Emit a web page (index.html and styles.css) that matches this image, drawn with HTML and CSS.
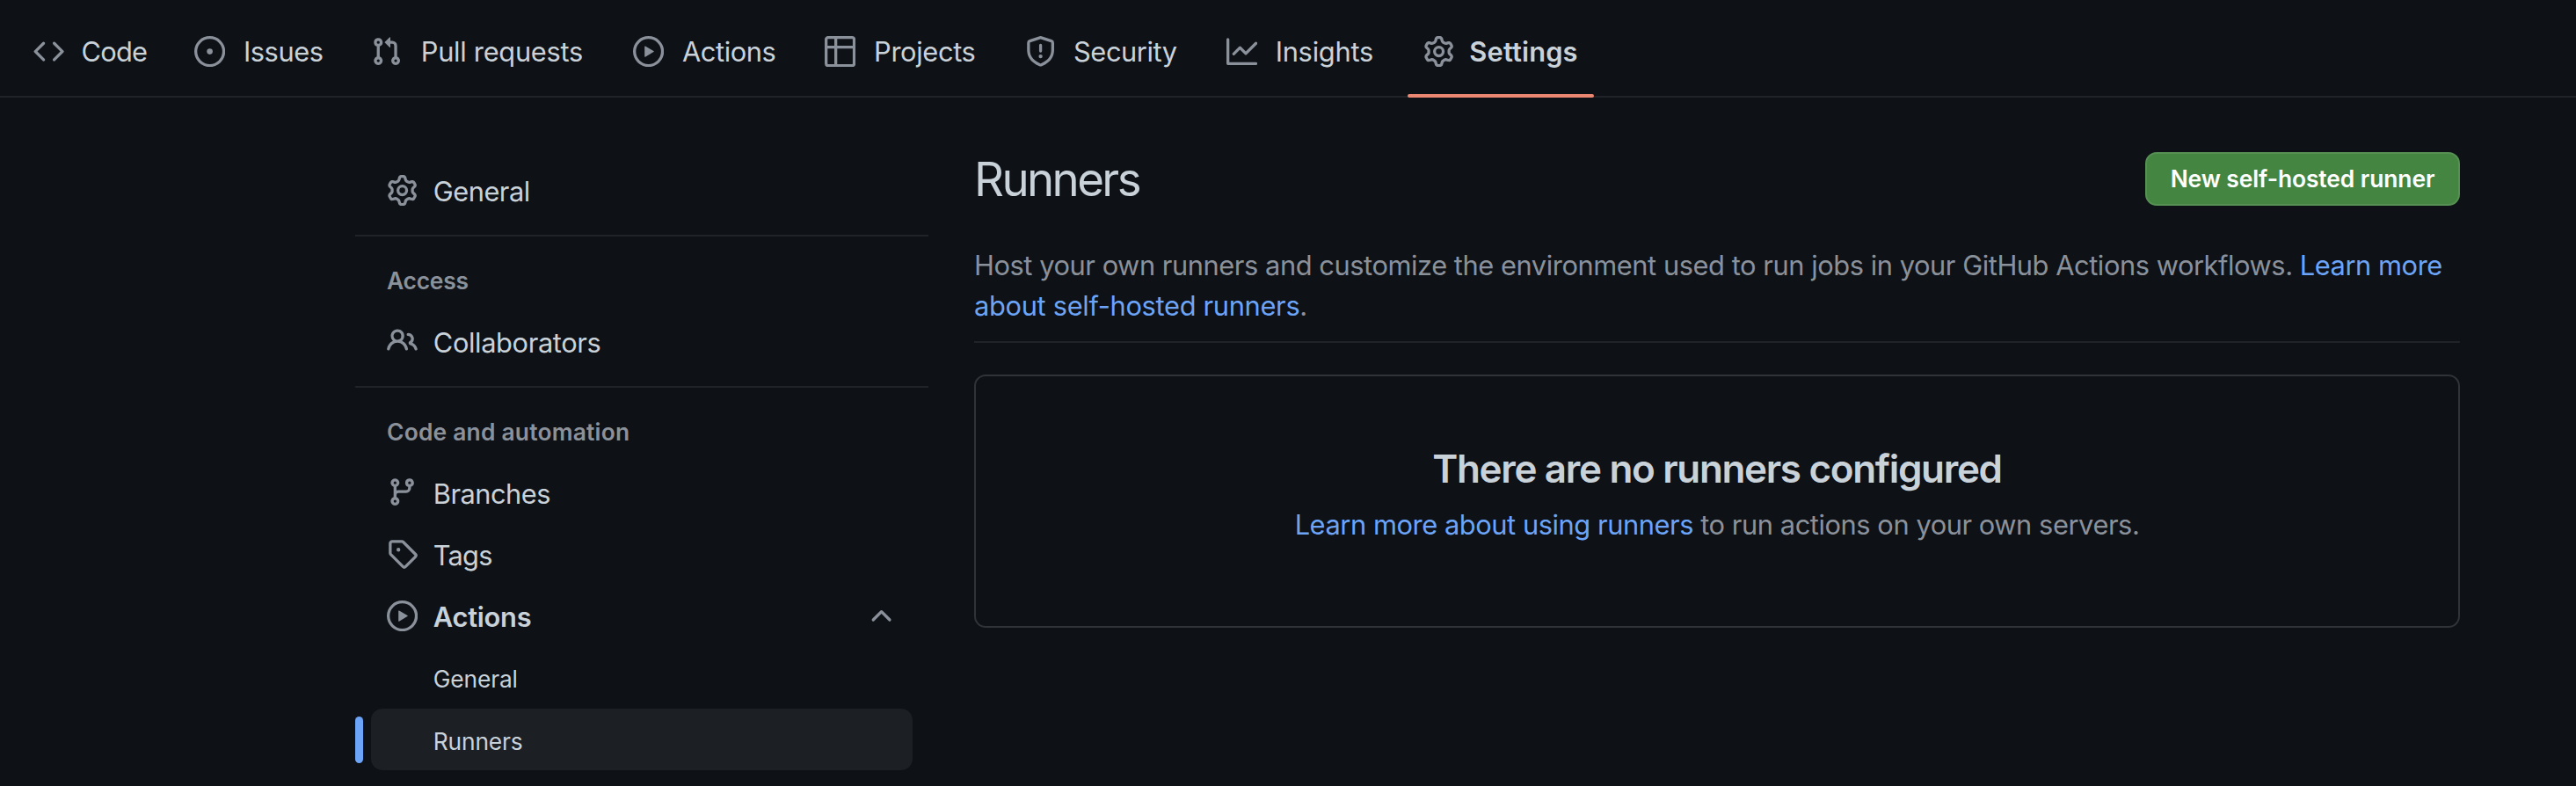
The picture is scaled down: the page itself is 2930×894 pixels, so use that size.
FILE: index.html
```html
<!DOCTYPE html>
<html lang="en">
<head>
<meta charset="utf-8">
<title>Runners</title>
<link rel="stylesheet" href="styles.css">
</head>
<body>
<nav class="tabs">
  <a class="tab tab-code"><svg class="icon" viewBox="0 0 16 16"><path d="m11.28 3.22 4.25 4.25a.75.75 0 0 1 0 1.06l-4.25 4.25a.749.749 0 0 1-1.275-.326.749.749 0 0 1 .215-.734L13.94 8l-3.72-3.72a.749.749 0 0 1 .326-1.275.749.749 0 0 1 .734.215Zm-6.56 0a.751.751 0 0 1 1.042.018.751.751 0 0 1 .018 1.042L2.06 8l3.72 3.72a.749.749 0 0 1-.326 1.275.749.749 0 0 1-.734-.215L.47 8.53a.75.75 0 0 1 0-1.06Z"/></svg><span>Code</span></a>
  <a class="tab tab-issues"><svg class="icon" viewBox="0 0 16 16"><path d="M8 9.5a1.5 1.5 0 1 0 0-3 1.5 1.5 0 0 0 0 3Z"/><path d="M8 0a8 8 0 1 1 0 16A8 8 0 0 1 8 0ZM1.5 8a6.5 6.5 0 1 0 13 0 6.5 6.5 0 0 0-13 0Z"/></svg><span>Issues</span></a>
  <a class="tab tab-pulls"><svg class="icon" viewBox="0 0 16 16"><path d="M1.5 3.25a2.25 2.25 0 1 1 3 2.122v5.256a2.251 2.251 0 1 1-1.5 0V5.372A2.25 2.25 0 0 1 1.5 3.25Zm5.677-.177L9.573.677A.25.25 0 0 1 10 .854V2.5h1A2.5 2.5 0 0 1 13.5 5v5.628a2.251 2.251 0 1 1-1.5 0V5a1 1 0 0 0-1-1h-1v1.646a.25.25 0 0 1-.427.177L7.177 3.427a.25.25 0 0 1 0-.354ZM3.75 2.5a.75.75 0 1 0 0 1.5.75.75 0 0 0 0-1.5Zm0 9.5a.75.75 0 1 0 0 1.5.75.75 0 0 0 0-1.5Zm8.25.75a.75.75 0 1 0 1.5 0 .75.75 0 0 0-1.5 0Z"/></svg><span>Pull requests</span></a>
  <a class="tab tab-actions"><svg class="icon" viewBox="0 0 16 16"><path d="M8 0a8 8 0 1 1 0 16A8 8 0 0 1 8 0ZM1.5 8a6.5 6.5 0 1 0 13 0 6.5 6.5 0 0 0-13 0Zm4.879-2.773 4.264 2.559a.25.25 0 0 1 0 .428l-4.264 2.559A.25.25 0 0 1 6 10.559V5.442a.25.25 0 0 1 .379-.215Z"/></svg><span>Actions</span></a>
  <a class="tab tab-projects"><svg class="icon" viewBox="0 0 16 16"><path d="M0 1.75C0 .784.784 0 1.75 0h12.5C15.216 0 16 .784 16 1.75v12.5A1.75 1.75 0 0 1 14.25 16H1.75A1.75 1.75 0 0 1 0 14.25ZM6.5 6.5v8h7.75a.25.25 0 0 0 .25-.25V6.5Zm8-1.5V1.75a.25.25 0 0 0-.25-.25H6.5V5Zm-13 1.5v7.75c0 .138.112.25.25.25H5v-8ZM5 5V1.5H1.75a.25.25 0 0 0-.25.25V5Z"/></svg><span>Projects</span></a>
  <a class="tab tab-security"><svg class="icon" viewBox="0 0 16 16"><path d="M7.467.133a1.748 1.748 0 0 1 1.066 0l5.25 1.68A1.75 1.75 0 0 1 15 3.48V7c0 1.566-.32 3.182-1.303 4.682-.983 1.498-2.585 2.813-5.032 3.855a1.697 1.697 0 0 1-1.33 0c-2.447-1.042-4.049-2.357-5.032-3.855C1.32 10.182 1 8.566 1 7V3.48a1.75 1.75 0 0 1 1.217-1.667Zm.61 1.429a.25.25 0 0 0-.153 0l-5.25 1.68a.25.25 0 0 0-.174.238V7c0 1.358.275 2.666 1.057 3.86.784 1.194 2.121 2.34 4.366 3.297a.196.196 0 0 0 .154 0c2.245-.956 3.582-2.104 4.366-3.298C13.225 9.666 13.5 8.36 13.5 7V3.48a.251.251 0 0 0-.174-.237l-5.25-1.68ZM8.75 4.75v3a.75.75 0 0 1-1.5 0v-3a.75.75 0 0 1 1.5 0ZM9 10.5a1 1 0 1 1-2 0 1 1 0 0 1 2 0Z"/></svg><span>Security</span></a>
  <a class="tab tab-insights"><svg class="icon" viewBox="0 0 16 16"><path d="M1.5 1.75V13.5h13.75a.75.75 0 0 1 0 1.5H.75a.75.75 0 0 1-.75-.75V1.75a.75.75 0 0 1 1.5 0Zm14.28 2.53-5.25 5.25a.75.75 0 0 1-1.06 0L7 7.06 4.28 9.78a.751.751 0 0 1-1.042-.018.751.751 0 0 1-.018-1.042l3.25-3.25a.75.75 0 0 1 1.06 0L10 7.94l4.72-4.72a.751.751 0 0 1 1.042.018.751.751 0 0 1 .018 1.042Z"/></svg><span>Insights</span></a>
  <a class="tab tab-settings is-current"><svg class="icon" viewBox="0 0 16 16"><path id="gear" d="M8 0a8.2 8.2 0 0 1 .701.031C9.444.095 9.99.645 10.16 1.29l.288 1.107c.018.066.079.158.212.224.231.114.454.243.668.386.123.082.233.09.299.071l1.103-.303c.644-.176 1.392.021 1.82.63.27.385.506.792.704 1.218.315.675.111 1.422-.364 1.891l-.814.806c-.049.048-.098.147-.088.294.016.257.016.515 0 .772-.01.147.038.246.088.294l.814.806c.475.469.679 1.216.364 1.891a7.977 7.977 0 0 1-.704 1.217c-.428.61-1.176.807-1.82.63l-1.102-.302c-.067-.019-.177-.011-.3.071a5.909 5.909 0 0 1-.668.386c-.133.066-.194.158-.211.224l-.29 1.106c-.168.646-.715 1.196-1.458 1.26a8.006 8.006 0 0 1-1.402 0c-.743-.064-1.289-.614-1.458-1.26l-.289-1.106c-.018-.066-.079-.158-.212-.224a5.738 5.738 0 0 1-.668-.386c-.123-.082-.233-.09-.299-.071l-1.103.303c-.644.176-1.392-.021-1.82-.63a8.12 8.12 0 0 1-.704-1.218c-.315-.675-.111-1.422.363-1.891l.815-.806c.05-.048.098-.147.088-.294a6.214 6.214 0 0 1 0-.772c.01-.147-.038-.246-.088-.294l-.815-.806C.635 6.045.431 5.298.746 4.623a7.92 7.92 0 0 1 .704-1.217c.428-.61 1.176-.807 1.82-.63l1.102.302c.067.019.177.011.3-.071.214-.143.437-.272.668-.386.133-.066.194-.158.211-.224l.29-1.106C6.009.645 6.556.095 7.299.03 7.53.01 7.764 0 8 0Zm-.571 1.525c-.036.003-.108.036-.137.146l-.289 1.105c-.147.561-.549.967-.998 1.189-.173.086-.34.183-.5.29-.417.278-.97.423-1.529.27l-1.103-.303c-.109-.03-.175.016-.195.045-.22.312-.412.644-.573.99-.014.031-.021.11.059.19l.815.806c.411.406.562.957.53 1.456a4.709 4.709 0 0 0 0 .582c.032.499-.119 1.05-.53 1.456l-.815.806c-.081.08-.073.159-.059.19.162.346.353.677.573.989.02.03.085.076.195.046l1.102-.303c.56-.153 1.113-.008 1.53.27.161.107.328.204.501.29.447.222.85.629.997 1.189l.289 1.105c.029.109.101.143.137.146a6.6 6.6 0 0 0 1.142 0c.036-.003.108-.036.137-.146l.289-1.105c.147-.561.549-.967.998-1.189.173-.086.34-.183.5-.29.417-.278.97-.423 1.529-.27l1.103.303c.109.029.175-.016.195-.045.22-.313.411-.644.573-.99.014-.031.021-.11-.059-.19l-.815-.806c-.411-.406-.562-.957-.53-1.456a4.709 4.709 0 0 0 0-.582c-.032-.499.119-1.05.53-1.456l.815-.806c.081-.08.073-.159.059-.19a6.464 6.464 0 0 0-.573-.989c-.02-.03-.085-.076-.195-.046l-1.102.303c-.56.153-1.113.008-1.53-.27a4.44 4.44 0 0 0-.501-.29c-.447-.222-.85-.629-.997-1.189l-.289-1.105c-.029-.11-.101-.143-.137-.146a6.6 6.6 0 0 0-1.142 0ZM11 8a3 3 0 1 1-6 0 3 3 0 0 1 6 0ZM9.5 8a1.5 1.5 0 1 0-3.001.001A1.5 1.5 0 0 0 9.5 8Z"/></svg><span>Settings</span></a>
</nav>
<div class="layout">
  <aside class="sidebar">
    <a class="item"><svg class="icon" viewBox="0 0 16 16"><use href="#gear"/></svg><span class="label t-general">General</span></a>
    <div class="divider"></div>
    <h3 class="group t-access">Access</h3>
    <a class="item"><svg class="icon" viewBox="0 0 16 16"><path d="M2 5.5a3.5 3.5 0 1 1 5.898 2.549 5.508 5.508 0 0 1 3.034 4.084.75.75 0 1 1-1.482.235 4 4 0 0 0-7.9 0 .75.75 0 0 1-1.482-.236A5.507 5.507 0 0 1 3.102 8.05 3.493 3.493 0 0 1 2 5.5ZM11 4a3.001 3.001 0 0 1 2.22 5.018 5.01 5.01 0 0 1 2.56 3.012.749.749 0 0 1-.885.954.752.752 0 0 1-.549-.514 3.507 3.507 0 0 0-2.522-2.372.75.75 0 0 1-.574-.73v-.352a.75.75 0 0 1 .416-.672A1.5 1.5 0 0 0 11 5.5.75.75 0 0 1 11 4Zm-5.5-.5a2 2 0 1 0-.001 3.999A2 2 0 0 0 5.5 3.5Z"/></svg><span class="label t-collab">Collaborators</span></a>
    <div class="divider"></div>
    <h3 class="group t-codeauto">Code and automation</h3>
    <a class="item"><svg class="icon" viewBox="0 0 16 16"><path d="M9.5 3.25a2.25 2.25 0 1 1 3 2.122V6A2.5 2.5 0 0 1 10 8.5H6a1 1 0 0 0-1 1v1.128a2.251 2.251 0 1 1-1.5 0V5.372a2.25 2.25 0 1 1 1.5 0v1.836A2.493 2.493 0 0 1 6 7h4a1 1 0 0 0 1-1v-.628A2.25 2.25 0 0 1 9.5 3.25Zm-6 0a.75.75 0 1 0 1.5 0 .75.75 0 0 0-1.5 0Zm8.25-.75a.75.75 0 1 0 0 1.5.75.75 0 0 0 0-1.5ZM4.25 12a.75.75 0 1 0 0 1.5.75.75 0 0 0 0-1.5Z"/></svg><span class="label t-branches">Branches</span></a>
    <a class="item"><svg class="icon" viewBox="0 0 16 16"><path d="M1 7.775V2.75C1 1.784 1.784 1 2.75 1h5.025c.464 0 .91.184 1.238.513l6.25 6.25a1.75 1.75 0 0 1 0 2.474l-5.026 5.026a1.75 1.75 0 0 1-2.474 0l-6.25-6.25A1.752 1.752 0 0 1 1 7.775Zm1.5 0c0 .066.026.13.073.177l6.25 6.25a.25.25 0 0 0 .354 0l5.025-5.025a.25.25 0 0 0 0-.354l-6.25-6.25a.25.25 0 0 0-.177-.073H2.75a.25.25 0 0 0-.25.25ZM6 5a1 1 0 1 1 0 2 1 1 0 0 1 0-2Z"/></svg><span class="label t-tags">Tags</span></a>
    <a class="item item-open"><svg class="icon" viewBox="0 0 16 16"><path d="M8 0a8 8 0 1 1 0 16A8 8 0 0 1 8 0ZM1.5 8a6.5 6.5 0 1 0 13 0 6.5 6.5 0 0 0-13 0Zm4.879-2.773 4.264 2.559a.25.25 0 0 1 0 .428l-4.264 2.559A.25.25 0 0 1 6 10.559V5.442a.25.25 0 0 1 .379-.215Z"/></svg><span class="label t-actions">Actions</span><svg class="icon chevron" viewBox="0 0 16 16"><path d="M3.22 10.53a.749.749 0 0 1 0-1.06l4.25-4.25a.749.749 0 0 1 1.06 0l4.25 4.25a.749.749 0 1 1-1.06 1.06L8 6.811 4.28 10.53a.749.749 0 0 1-1.06 0Z"/></svg></a>
    <a class="item sub"><span class="label">General</span></a>
    <a class="item sub selected"><span class="label">Runners</span></a>
  </aside>
  <main class="content">
    <header class="head">
      <h1 class="title">Runners</h1>
      <button class="new-runner"><span>New self-hosted runner</span></button>
    </header>
    <p class="intro"><span class="line1">Host your own runners and customize the environment used to run jobs in your GitHub Actions workflows. <a class="link">Learn more</a></span><br><span class="line2"><a class="link">about self-hosted runners</a>.</span></p>
    <section class="blank">
      <h2 class="blank-title">There are no runners configured</h2>
      <p class="blank-text"><a class="link">Learn more about using runners</a> to run actions on your own servers.</p>
    </section>
  </main>
</div>
</body>
</html>
```
FILE: styles.css
```css
* { box-sizing: border-box; }
body {
  margin: 0;
  height: 894px;
  overflow: hidden;
  background: #0e1116;
  color: #c9d1d9;
  font-family: Inter, "Liberation Sans", sans-serif;
  font-size: 30.8px;
}
h1, h2, h3, p { margin: 0; }
.icon { width: 35.2px; height: 35.2px; fill: #8b919a; flex: none; display: block; }

.tabs {
  display: flex;
  height: 111px;
  padding-left: 20px;
  border-bottom: 2px solid #202428;
}
.tab {
  display: flex;
  align-items: flex-start;
  gap: 20.8px;
  height: 111px;
  padding: 41px 0 0 17.6px;
  line-height: 36px;
  letter-spacing: -0.45px;
  white-space: nowrap;
}
.tab-code { width: 183.4px; gap: 19.6px; letter-spacing: -0.7px; }
.tab-issues { width: 200.6px; }
.tab-pulls { width: 298.5px; gap: 22px; letter-spacing: -0.28px; }
.tab-actions { width: 218px; }
.tab-projects { width: 228px; letter-spacing: -0.35px; }
.tab-security { width: 228.6px; gap: 19.8px; }
.tab-insights { width: 223.9px; letter-spacing: -0.25px; }
.tab-settings { width: 212px; gap: 17.6px; letter-spacing: 0.15px; }
.is-current {
  font-weight: 600;
  position: relative;
}
.is-current::after {
  content: "";
  position: absolute;
  left: 0;
  right: 0;
  bottom: 0;
  height: 4px;
  border-radius: 2px;
  background: #ec8871;
}

.layout { display: flex; gap: 52px; padding-left: 404px; }
.sidebar { width: 652px; padding-top: 70px; }
.item {
  display: flex;
  align-items: center;
  gap: 17.6px;
  height: 70.4px;
  margin: 0 18px;
  padding: 0 18px;
  border-radius: 13px;
}
.label { padding-top: 3px; }
.divider { height: 2px; margin-top: 16px; background: #202428; }
.group {
  height: 83.3px;
  padding: 32px 36px 0;
  font-size: 26.4px;
  line-height: 36px;
  font-weight: 600;
  color: #8b919a;
}
.t-general, .t-branches { letter-spacing: -0.5px; }
.t-access { letter-spacing: -0.25px; }
.t-collab { letter-spacing: -0.37px; }
.t-codeauto { letter-spacing: 0.2px; }
.t-tags { letter-spacing: -0.8px; }
.t-actions { letter-spacing: -0.25px; }
.item-open { font-weight: 600; }
.chevron { margin-left: auto; }
.sub { padding-left: 70.8px; font-size: 26.4px; letter-spacing: -0.18px; }
.selected { position: relative; background: #1c1f24; }
.selected::before {
  content: "";
  position: absolute;
  left: -18px;
  top: 9px;
  width: 9px;
  height: 53px;
  border-radius: 5px;
  background: #6ca4f8;
}

.content { width: 1690px; padding-top: 62px; }
.head { display: flex; justify-content: space-between; height: 106px; }
.title { font-size: 52.8px; line-height: 62px; font-weight: 400; letter-spacing: -2.6px; }
.new-runner {
  width: 358px;
  height: 61px;
  border: 2px solid #569153;
  border-radius: 13px;
  padding: 0;
  background: #448541;
  color: #fff;
  font: 600 26.4px/57px Inter, "Liberation Sans", sans-serif;
  letter-spacing: -0.08px;
}
.intro {
  height: 111px;
  line-height: 46.2px;
  color: #8b919a;
  border-bottom: 2px solid #202428;
  white-space: nowrap;
}
.line1 { letter-spacing: -0.435px; }
.line2 { letter-spacing: -0.31px; }
.link { color: #6ca4f8; }
.blank {
  height: 288px;
  margin-top: 36px;
  padding-top: 72px;
  border: 2px solid #303338;
  border-radius: 13px;
  text-align: center;
}
.blank-title { font-size: 44px; line-height: 66px; font-weight: 600; letter-spacing: -1.34px; }
.blank-text { line-height: 46px; margin-top: 8px; color: #8b919a; letter-spacing: -0.43px; }
```
